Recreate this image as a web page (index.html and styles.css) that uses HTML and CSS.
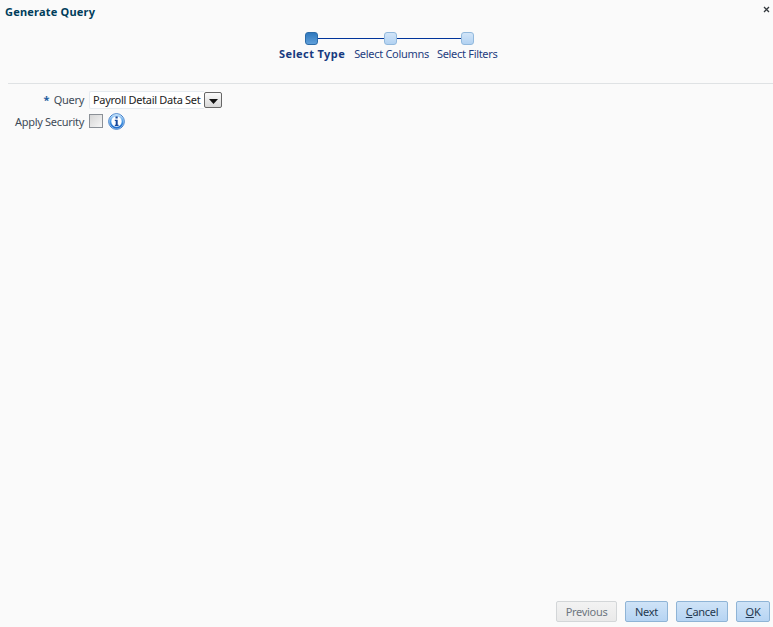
FILE: index.html
```html
<!DOCTYPE html>
<html lang="en">
<head>
<meta charset="utf-8">
<title>Generate Query</title>
<link rel="stylesheet" href="styles.css">
</head>
<body>
<div class="dialog">
  <header class="title-bar">
    <h1 class="title">Generate Query</h1>
    <svg class="close" width="7" height="7" viewBox="0 0 7 7" aria-label="Close"><path d="M1 1l5 5M6 1L1 6" stroke="#33383d" stroke-width="1.3" fill="none"/></svg>
  </header>
  <nav class="train">
    <div class="track">
      <span class="stop stop-active"></span>
      <span class="link link-a"></span>
      <span class="stop"></span>
      <span class="link link-b"></span>
      <span class="stop"></span>
    </div>
    <div class="labels">
      <span class="label label-active">Select Type</span>
      <span class="label label-columns">Select Columns</span>
      <span class="label">Select Filters</span>
    </div>
  </nav>
  <div class="rule"></div>
  <main class="form">
    <div class="row row-query">
      <label class="field-label"><span class="req">*</span> Query</label>
      <div class="select">
        <span class="select-value">Payroll Detail Data Set</span>
        <span class="select-btn"><svg width="9" height="5" viewBox="0 0 9 5"><path d="M0 0h9L4.5 5z" fill="#111"/></svg></span>
      </div>
    </div>
    <div class="row row-security">
      <label class="field-label">Apply Security</label>
      <span class="checkbox"></span>
      <svg class="info" width="17" height="17" viewBox="0 0 17 17" aria-label="Information">
        <defs><linearGradient id="ig" x1="0" y1="0" x2="0" y2="1"><stop offset="0" stop-color="#b5daf9"/><stop offset="0.5" stop-color="#4a9ae6"/><stop offset="1" stop-color="#1f6ccb"/></linearGradient></defs>
        <circle cx="8.5" cy="8.5" r="7.8" fill="#fff" stroke="#2a71c6" stroke-width="1"/>
        <circle cx="8.5" cy="8.5" r="6.2" fill="none" stroke="url(#ig)" stroke-width="2"/>
        <rect x="7.5" y="3.4" width="2.2" height="2.1" fill="#17489a"/>
        <path d="M6.8 6.8h2.9v5h.9v1.2H6.8v-1.2h.9v-3.8h-.9z" fill="#17489a"/>
      </svg>
    </div>
  </main>
  <footer class="actions">
    <button class="btn btn-disabled btn-prev" type="button" disabled>Previous</button>
    <button class="btn btn-next" type="button">Next</button>
    <button class="btn btn-cancel" type="button"><u>C</u>ancel</button>
    <button class="btn btn-ok" type="button"><u>O</u>K</button>
  </footer>
</div>
</body>
</html>
```
FILE: styles.css
```css
* { box-sizing: border-box; }
html, body { margin: 0; height: 100%; }
body { background: #fafafa; font-family: "Noto Sans", "Open Sans", sans-serif; font-size: 11px; letter-spacing: -0.3px; color: #39424e; overflow: hidden; }
.dialog { display: flex; flex-direction: column; height: 627px; }
.title-bar { display: flex; justify-content: space-between; align-items: flex-start; height: 31px; padding: 5px 3px 0 5px; }
.title { margin: 0; font-size: 11px; line-height: 14px; font-weight: 700; letter-spacing: 0.2px; color: #003d5b; }
.close { margin-top: 1px; }
.train { display: flex; flex-direction: column; height: 52px; }
.track { display: flex; align-items: center; height: 14px; padding-left: 305px; }
.stop { width: 13px; height: 13px; border-radius: 3px; background: linear-gradient(#d2e5f8, #b2d2f2); border: 1px solid #92b9dd; flex: none; }
.stop-active { background: linear-gradient(#2f78bd, #5f9fd9); border-color: #2d6ca8; }
.link { height: 1px; background: #00349a; flex: none; }
.link-a { width: 66px; }
.link-b { width: 64px; }
.labels { display: flex; margin-top: 1px; padding-left: 279px; line-height: 16px; }
.label { color: #1f3d80; margin-right: 9px; white-space: nowrap; }
.label-columns { margin-right: 8px; }
.label-active { font-weight: 700; letter-spacing: 0.4px; color: #173a80; }
.rule { height: 1px; margin-left: 8px; background: #dfe2e4; }
.form { padding-top: 5px; }
.row { display: flex; align-items: center; }
.row-query { height: 21px; }
.row-security { height: 22px; }
.field-label { width: 85px; padding-right: 1px; text-align: right; white-space: nowrap; color: #3e4a57; }
.req { color: #1f5da0; font-weight: 700; margin-right: 2px; }
.select { display: flex; align-items: center; margin-left: 4px; height: 18px; }
.select-value { width: 115px; height: 18px; line-height: 16px; padding-left: 3px; background: #fff; border: 1px solid #e6ebf0; border-right: 0; border-radius: 2px 0 0 2px; color: #222; white-space: nowrap; }
.select-btn { display: flex; align-items: center; justify-content: center; width: 18px; height: 16px; padding-top: 4px; background: linear-gradient(#fafafa, #d8d8d8); border: 1px solid #666; border-radius: 2px; }
.checkbox { width: 14px; height: 14px; margin-left: 4px; background: linear-gradient(135deg, #d6d6d6, #f6f6f6); border: 1px solid #8b9096; }
.info { margin-left: 5px; }
.actions { display: flex; justify-content: flex-end; margin-top: auto; padding: 0 3px 5px 0; }
.btn { height: 21px; padding: 0; font: inherit; letter-spacing: inherit; line-height: 18px; color: #24384f; background: linear-gradient(#cfe3f7, #b6d4f3); border: 1px solid #8fb4d6; border-radius: 2px; }
.btn-prev { width: 61px; }
.btn-next { width: 43px; margin-left: 8px; }
.btn-cancel { width: 52px; margin-left: 8px; }
.btn-ok { width: 34px; margin-left: 8px; }
.btn-disabled { color: #6d7680; background: linear-gradient(#f3f3f3, #e9e9e9); border-color: #d3d6d8; }
```
